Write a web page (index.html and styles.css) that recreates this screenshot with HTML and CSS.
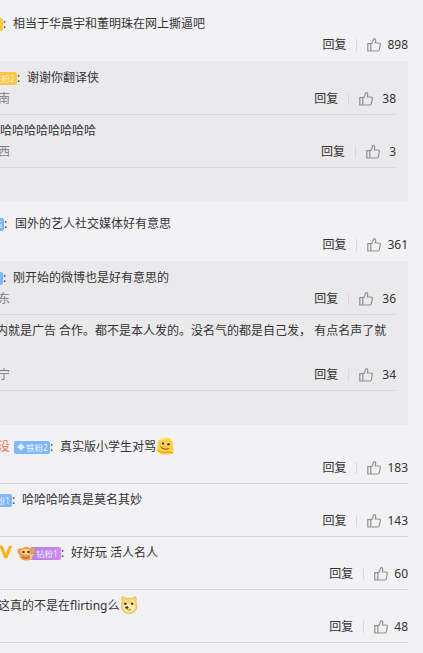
FILE: index.html
```html
<!DOCTYPE html>
<html lang="zh-CN">
<head>
    <meta charset="UTF-8">
    <meta name="viewport" content="width=device-width, initial-scale=1.0">
    <title>评论</title>
    <link rel="stylesheet" href="styles.css">
</head>
<body>
    <!-- shared icons -->
    <svg class="defs" width="0" height="0">
        <symbol id="like" viewBox="0 0 14 14">
            <path d="M.8 5.700h3v7.300h-3zM3.800 6.200C5.200 5.400 6 4.200 6.200 2.200c.1-1 .6-1.600 1.300-1.500 1 .1 1.300 1 1.200 2.100l-.3 2.200h3.600c1 0 1.500.6 1.300 1.500l-.9 5c-.2 1-.6 1.500-1.400 1.500H3.800"/>
        </symbol>
        <symbol id="gem" viewBox="0 0 8 8">
            <path d="M4 0l1.500 2.100L8 4 5.600 5.800 4 8 2.400 5.800 0 4l2.500-1.900z"/>
        </symbol>
    </svg>
    <main class="list">
        <div class="item">
            <div class="text cut-badge"><span class="badge gold"><svg><use href="#gem"/></svg>铁粉1</span><b class="colon">:</b>相当于华晨宇和董明珠在网上撕逼吧</div>
            <div class="meta"><a>回复</a><i></i><svg><use href="#like"/></svg><span class="num">898</span></div>
        </div>
        <div class="replies">
            <div class="item">
                <div class="text cut-badge-gold"><span class="badge gold"><svg><use href="#gem"/></svg>铁粉2</span><b class="colon">:</b>谢谢你翻译侠</div>
                <div class="meta"><span class="from">南</span><a>回复</a><i></i><svg><use href="#like"/></svg><span class="num">38</span></div>
            </div>
            <div class="item">
                <div class="text">哈哈哈哈哈哈哈哈</div>
                <div class="meta"><span class="from">西</span><a>回复</a><i></i><svg><use href="#like"/></svg><span class="num">3</span></div>
            </div>
        </div>
        <div class="item">
            <div class="text cut-badge-six"><span class="badge"><svg><use href="#gem"/></svg>铁粉6</span><b class="colon">:</b>国外的艺人社交媒体好有意思</div>
            <div class="meta"><a>回复</a><i></i><svg><use href="#like"/></svg><span class="num">361</span></div>
        </div>
        <div class="replies">
            <div class="item">
                <div class="text cut-badge"><span class="badge"><svg><use href="#gem"/></svg>铁粉1</span><b class="colon">:</b>刚开始的微博也是好有意思的</div>
                <div class="meta"><span class="from">东</span><a>回复</a><i></i><svg><use href="#like"/></svg><span class="num">36</span></div>
            </div>
            <div class="item tall">
                <div class="text cut-word">内就是广告 合作。都不是本人发的。没名气的都是自己发， 有点名声了就</div>
                <div class="meta"><span class="from">宁</span><a>回复</a><i></i><svg><use href="#like"/></svg><span class="num">34</span></div>
            </div>
        </div>
        <div class="item">
            <div class="text cut-name"><span class="name">没</span><span class="badge"><svg><use href="#gem"/></svg>铁粉2</span><b class="colon">:</b>真实版小学生对骂<svg class="emoji" viewBox="0 0 18 18">
                <path d="M2 15.200C.2 14.300.5 12.700 1.600 12 .4 5 3.600.6 9 .6s8.700 4 8 9.200c-.2 1.500.8 2.200.6 3.400 0 1.200-.8 1.800-.6 2.800.1 1.400-3.800 1.700-7 1.500-3.500 0-7-.5-8-2.300z" fill="#ffd043"/>
                <path d="M1.600 12.500c1.800 3 5.400 3.300 9 2.800 2.500-.3 4.500-.1 6.400.7" fill="none" stroke="#e39a24" stroke-width="1"/>
                <path d="M4 3.500c1.500-1.600 4-2.200 6.500-1.700" fill="none" stroke="#ffe98a" stroke-width="1.200"/>
                <circle cx="7" cy="6.500" r="1.700" fill="#fff"/><circle cx="12.500" cy="7.200" r="1.700" fill="#fff"/>
                <circle cx="7" cy="6.500" r="1.300" fill="#5a2d0c"/><circle cx="12.500" cy="7.200" r="1.300" fill="#5a2d0c"/>
                <path d="M4.500 9.800c1.800 2.300 5.300 3 8.300 1.700" fill="none" stroke="#8a4b12" stroke-width="1"/>
            </svg></div>
            <div class="meta"><a>回复</a><i></i><svg><use href="#like"/></svg><span class="num">183</span></div>
        </div>
        <div class="item">
            <div class="text cut-badge-one"><span class="badge"><svg><use href="#gem"/></svg>铁粉1</span><b class="colon">:</b>哈哈哈哈真是莫名其妙</div>
            <div class="meta"><a>回复</a><i></i><svg><use href="#like"/></svg><span class="num">143</span></div>
        </div>
        <div class="item">
            <div class="text"><span class="vip">V</span><span class="badge purple"><svg class="mascot" viewBox="0 0 19 15">
                <path d="M.6 3.500C1.500 1.800 3.500 2 5 2.600 7 .4 11 .2 13 2.200c2-.9 4.500-.4 4.900 1.400.4 1.700-.9 2.800-1.600 3.800.6 3.600-1.600 6.800-5.200 7-4.800.6-8.300-1.200-8.400-5C1.200 8-.4 5.600.6 3.500z" fill="#eda052"/>
                <path d="M4.500 4.500c2-2 6-2 8-.3 1.500 1.600.3 4.300-3.200 4.500-3.300.2-6-2-4.800-4.200z" fill="#ffdc9c"/>
                <circle cx="6.500" cy="6" r="1.300" fill="#6b3516"/><circle cx="11.500" cy="6" r="1.300" fill="#6b3516"/>
                <path d="M5 10.500c2 1.700 5 1.900 7.500.4" fill="none" stroke="#c66724" stroke-width="1.500"/>
                <path d="M12.500 8l1.500 2.500L16.500 8M14 10.500V13" fill="none" stroke="#fff0d8"/>
            </svg>钻粉1</span><b class="colon">:</b>好好玩 活人名人</div>
            <div class="meta"><a>回复</a><i></i><svg><use href="#like"/></svg><span class="num">60</span></div>
        </div>
        <div class="item">
            <div class="text cut-start">这真的不是在flirting么<svg class="emoji" viewBox="0 0 18 18">
                <path d="M2.300 6C1.300 3 1.600.8 2.800.6c1.200 0 2.200 1.200 3.200 2 2-.6 4-.6 6 0 1.100-1 2.400-2.200 3.400-1.800 1.200.6 1 3.500.5 5.400 2.600 5.800-.6 11.300-6.900 11.300S-.4 11.800 2.300 6z" fill="#f6d66a" stroke="#d9ac48" stroke-width=".6"/>
                <path d="M4 9.500c2-2.500 8-2.500 10.300-.5 1.200 4-1.300 7-5.300 7s-6-3-5-6.500z" fill="#fff1b5"/>
                <path d="M4 5.500l2.600-1M11.300 4.500l2.800 1" stroke="#fff6cf" stroke-width="1.200"/>
                <circle cx="5.800" cy="7.800" r="1.700" fill="#fff"/><circle cx="12.700" cy="7.800" r="1.700" fill="#fff"/>
                <circle cx="5.400" cy="7.800" r="1.300" fill="#542a12"/><circle cx="12.200" cy="7.800" r="1.300" fill="#542a12"/>
                <ellipse cx="6.800" cy="11.500" rx="1.700" ry="1.200" fill="#542a12"/>
                <path d="M6.800 12.500c.4 1.500 2.500 1.800 4.200.7" fill="none" stroke="#8a5225" stroke-width=".9"/>
            </svg></div>
            <div class="meta"><a>回复</a><i></i><svg><use href="#like"/></svg><span class="num">48</span></div>
        </div>
    </main>
</body>
</html>
```
FILE: styles.css
```css
body {
    margin: 0;
    background-color: #f2f2f5;
    color: #333;
    font-family: "Noto Sans", "Noto Sans CJK SC", sans-serif;
    font-size: 12px;
    overflow: hidden;
}
.defs {
    position: absolute;
}
.list {
    width: 408px;
    padding-top: 8px;
}
.item {
    box-sizing: border-box;
    height: 53px;
    padding-top: 6px;
    border-bottom: 1px solid #d9d9d9;
    display: flex;
    flex-direction: column;
    gap: 1px;
}
.item:has(+ .replies) {
    border-bottom: none;
}
.item.tall {
    height: 76px;
}
.tall .meta {
    margin-top: 23px;
}
.replies {
    background-color: #eaeaec;
    padding: 1px 12px 34px 0;
    margin-bottom: 6px;
}
.text {
    display: flex;
    align-items: center;
    height: 20px;
    line-height: 20px;
    white-space: pre;
}

/* rows that run past the left edge */
.cut-badge {
    margin-left: -33px;
}
.cut-badge-gold {
    margin-left: -19px;
}
.cut-badge-six {
    margin-left: -32px;
}
.cut-badge-six .colon {
    width: 11px;
}
.cut-badge-one {
    margin-left: -24px;
}
.cut-word {
    margin-left: -4px;
}
.cut-name {
    margin-left: -2px;
}
.cut-start {
    margin-left: -2px;
}

.meta {
    display: flex;
    align-items: center;
    justify-content: flex-end;
    height: 20px;
    line-height: 20px;
}
.meta i {
    width: 1px;
    height: 12px;
    margin: 0 10px;
    background-color: #d9d9d9;
}
.meta svg {
    width: 14px;
    height: 14px;
    margin-top: -1px;
    fill: none;
    stroke: #8f8f8f;
    stroke-width: 1.2;
}
.num {
    margin-left: 6px;
}
.replies .num {
    margin-left: 9px;
}
.from {
    color: #808080;
    margin-left: -2px;
    margin-right: auto;
}
.name {
    color: #eb7350;
    margin-right: 4px;
}
.badge {
    box-sizing: border-box;
    display: flex;
    align-items: center;
    width: 36px;
    height: 13px;
    padding-left: 3px;
    border-radius: 2px;
    background-color: #7fb8fa;
    color: #e4f1ff;
    font-size: 8.5px;
    line-height: 13px;
    flex-shrink: 0;
}
.badge svg {
    width: 8px;
    height: 8px;
    margin-right: 1px;
    fill: #e4f1ff;
    flex-shrink: 0;
}
.badge.gold {
    background-color: #ffc547;
    color: #fff0bd;
}
.badge.purple {
    width: 44px;
    padding-left: 0;
    background: linear-gradient(90deg, transparent 14px, #a982e8 14px, #d18af0);
    color: #f6e6ff;
}
.badge .mascot {
    width: 19px;
    height: 15px;
    margin-right: 0;
}
.colon {
    width: 10px;
    font-weight: normal;
}
.vip {
    width: 17px;
    color: #ffb000;
    font: 900 17px/20px Lato, sans-serif;
    margin-top: -2px;
    -webkit-text-stroke: .5px #ffb000;
}
.emoji {
    width: 18px;
    height: 18px;
    margin-top: -2px;
}
```
